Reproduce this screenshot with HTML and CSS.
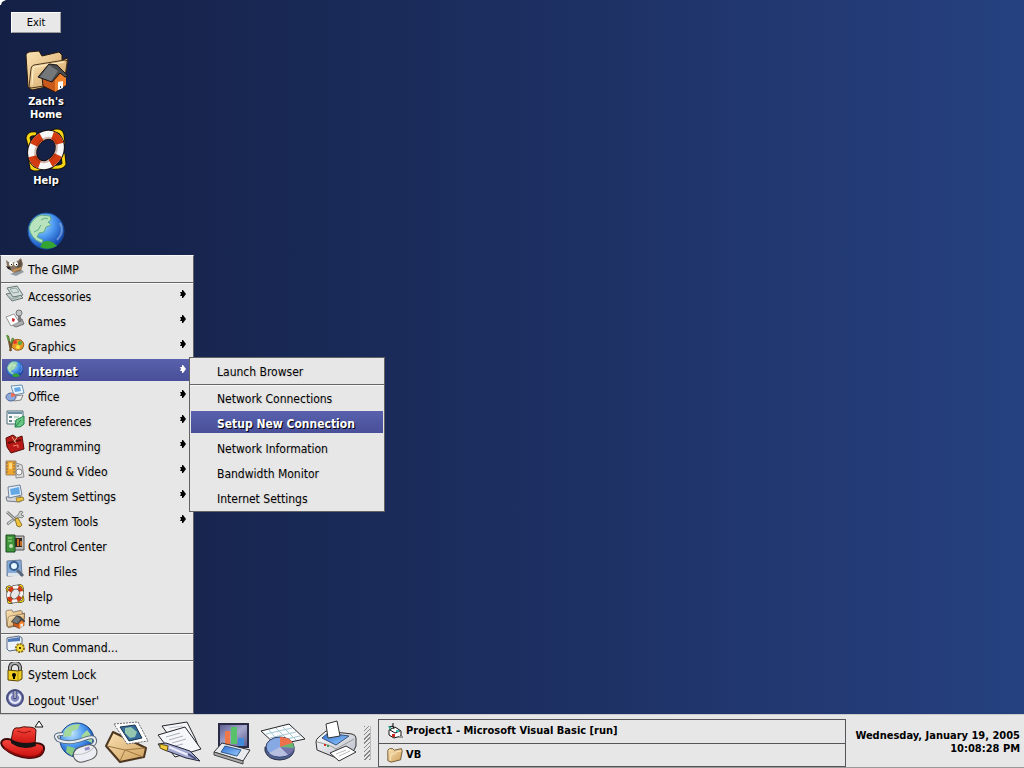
FILE: index.html
```html
<!DOCTYPE html>
<html lang="en">
<head>
<meta charset="utf-8">
<title>Desktop</title>
<link rel="stylesheet" href="styles.css">
</head>
<body>
<svg class="defs" aria-hidden="true">
  <defs>
    <linearGradient id="tan" x1="0" y1="0" x2="1" y2="1"><stop offset="0" stop-color="#fbe3b4"/><stop offset="1" stop-color="#cf9f5c"/></linearGradient>
    <radialGradient id="sea" cx=".35" cy=".3" r=".75"><stop offset="0" stop-color="#c2e6fb"/><stop offset=".5" stop-color="#4b98f0"/><stop offset="1" stop-color="#0d3da8"/></radialGradient>
    <linearGradient id="silver" x1="0" y1="0" x2="1" y2="1"><stop offset="0" stop-color="#fff"/><stop offset="1" stop-color="#b4b8c4"/></linearGradient>
    <linearGradient id="blue" x1="0" y1="0" x2="1" y2="1"><stop offset="0" stop-color="#2c6fd6"/><stop offset="1" stop-color="#9ccdfa"/></linearGradient>
    <linearGradient id="slate" x1="0" y1="0" x2="1" y2="1"><stop offset="0" stop-color="#59598c"/><stop offset=".5" stop-color="#a5a7cd"/><stop offset="1" stop-color="#55578a"/></linearGradient>
    <linearGradient id="felt" x1="0" y1="0" x2="0" y2="1"><stop offset="0" stop-color="#f9483c"/><stop offset="1" stop-color="#c80d0d"/></linearGradient>
  </defs>
  <symbol id="home" viewBox="0 0 44 44">
    <path d="M4 38 2 6q0-2 3-3l10-1 3 5 17-4 3 3v5l6-2-4 27-18 2-14 3z" fill="url(#tan)" stroke="#28190d"/>
    <path d="M5 38 7 20q0-3 3-4l31-5q3 0 2 3l-3 20-33 5z" fill="url(#tan)" stroke="#4c351c"/>
    <path d="m8 36 1-15q0-3 3-3l28-5" fill="none" stroke="#fff0cb"/>
    <path d="m18 28 1 9 12 6 11-7-1-10-9-8-9 1z" fill="#c9591b" stroke="#2b1305"/>
    <path d="m31 31 7-8 4 3v10l-11 7z" fill="#ef812c"/>
    <path d="m14 28 11-13 8 1 11 11-3 1-5-4-8 9z" fill="#4a4d4e" stroke="#171717"/>
    <path d="m25 16 9 6-7 10-11-4z" fill="#74787a"/>
    <path d="m34 33 5-1v7l-5 2z" fill="#fff"/><path d="M36 37h1v2h-1z" fill="#345"/>
  </symbol>
  <symbol id="buoy" viewBox="0 0 44 44">
    <path d="M12 6Q5 5 4 10l3 11M28 4q9-3 10 3l1 9M6 29l2 11q3 2 9 0M39 26l1 10q-2 4-12 3" fill="none" stroke="#181408" stroke-width="5"/>
    <path d="M12 6Q5 5 4 10l3 11M28 4q9-3 10 3l1 9M6 29l2 11q3 2 9 0M39 26l1 10q-2 4-12 3" fill="none" stroke="#f7d516" stroke-width="3"/>
    <g transform="rotate(32 22 22)">
      <ellipse cx="22" cy="22" rx="13" ry="16" fill="none" stroke="#171010" stroke-width="10"/>
      <ellipse cx="22" cy="22" rx="13" ry="16" fill="none" stroke="#f7f7f7" stroke-width="8"/>
      <ellipse cx="22" cy="22" rx="13" ry="16" fill="none" stroke="#d43b10" stroke-width="8" pathLength="80" stroke-dasharray="10 10" stroke-dashoffset="2"/>
      <ellipse cx="22" cy="22" rx="10" ry="13" fill="none" stroke="#812409" stroke-opacity=".3" stroke-width="2"/>
    </g>
  </symbol>
  <symbol id="globe" viewBox="0 0 44 44">
    <circle cx="22" cy="22" r="18" fill="url(#sea)" stroke="#164a96"/>
    <path d="M5 19q3-10 12-13l9 1 1 4-3 2 3 3-5 2-2 5-5 1-2 4 6 3-1 3q-6-2-9-6-3-4-4-9z" fill="#b8e3bd" stroke="#5fae86"/>
    <path d="M17 11l4-2 3 1M10 23l4-2 3-5" fill="none" stroke="#5fae86"/>
    <path d="M19 33q7-3 12 2l2 2q-9 5-17 1z" fill="#35a532"/>
    <path d="M36 14q5 9-3 17" fill="none" stroke="#d2e9fa" stroke-opacity=".4" stroke-width="2"/>
  </symbol>
  <symbol id="folder" viewBox="0 0 20 20">
    <path d="M1 17V4l2-2h4l2 2 9-2 1 3-2 11-12 3z" fill="url(#tan)" stroke="#5c451f"/><path d="m4 17 1-8q6 0 7-3l6-1" fill="none" stroke="#fff0c8"/>
  </symbol>
  <symbol id="arrow" viewBox="0 0 6 10"><path d="M0 3h2V1h1l3 4-3 4H2V7H0l1-2z" fill="currentColor"/></symbol>
</svg>

<div class="screen">
  <main class="desktop">
    <svg class="cursor" viewBox="0 0 6 5" aria-hidden="true"><path d="M0 0h6L4 1 2 2 1 5H0z" fill="#fff"/></svg>
    <button class="exit" type="button">Exit</button>
    <div class="shortcuts">
      <a class="shortcut" href="#home"><svg class="big"><use href="#home"/></svg><span>Zach's Home</span></a>
      <a class="shortcut help" href="#help"><svg class="big"><use href="#buoy"/></svg><span>Help</span></a>
      <a class="shortcut" href="#web" aria-label="Web browser"><svg class="big"><use href="#globe"/></svg></a>
    </div>

    <nav class="menu start" aria-label="Start menu">
      <div class="group single">
        <button class="item" type="button"><svg class="icon" viewBox="0 0 20 20"><path d="m5 17 12-4 2 2-8 4z" fill="#929ba2"/><path d="m1 3 4 3 6-1 5-4 2 6-2 7-7 2-4-3-3-4z" fill="#8a7562"/><path d="m13 6 3-4 1 5-2 6-4 1z" fill="#5d5046"/><path d="m1 9 4 1 1 3-3-1z" fill="#222"/><circle cx="6" cy="7" r="2" fill="#fff"/><circle cx="11" cy="7" r="2" fill="#fff"/><path d="M6 7h1v1H6zM11 7h1v1h-1z"/><path d="m8 14 8-3" stroke="#c89150" stroke-width="2"/></svg><span>The GIMP</span></button>
      </div>
      <div class="group">
        <button class="item" type="button"><svg class="icon" viewBox="0 0 20 20"><path d="m1 10 11-2 6 6-11 3z" fill="#c8d0d0" stroke="#667672"/><path d="m2 4 10-2 6 9-10 2z" fill="#d4dfdd" stroke="#667672"/><path d="m5 5 6-1 3 4-6 1zM3 12l4 3 7-2" fill="none" stroke="#91a8a1"/></svg><span>Accessories</span><svg class="arrow"><use href="#arrow"/></svg></button>
        <button class="item" type="button"><svg class="icon" viewBox="0 0 20 20"><path d="m8 11 9-1 2 5-8 3-4-2z" fill="#adb0b2" stroke="#6d7072"/><path d="m1 8 8-3 5 8-8 4z" fill="#fff" stroke="#999"/><path d="m7 9 3 1-1 3-2-1z" fill="#d4252c"/><path d="m14 5 1 8" stroke="#777" stroke-width="3"/><circle cx="14" cy="4" r="3" fill="#c1c4c5" stroke="#747678"/></svg><span>Games</span><svg class="arrow"><use href="#arrow"/></svg></button>
        <button class="item" type="button"><svg class="icon" viewBox="0 0 20 20"><path d="M5 9q4-5 11-3 5 4 1 9-6 3-9-1l-3-1z" fill="#e89a28" stroke="#966018"/><circle cx="10" cy="8" r="2" fill="#e53e2c"/><circle cx="15" cy="9" r="2" fill="#53a84a"/><circle cx="13" cy="13" r="2" fill="#ffe13f"/><path d="m3 2 3 15M8 4 5 17" stroke="#715128" stroke-width="2"/><path d="m2 1 2 6M8 4 6 9" stroke="#5c9b44" stroke-width="2"/></svg><span>Graphics</span><svg class="arrow"><use href="#arrow"/></svg></button>
        <button class="item active" type="button" aria-expanded="true"><svg class="icon"><use href="#globe"/></svg><span>Internet</span><svg class="arrow"><use href="#arrow"/></svg></button>
        <button class="item" type="button"><svg class="icon" viewBox="0 0 20 20"><path d="m6 2 11-1 2 8-10 2z" fill="#e8f5ff" stroke="#6c91b5"/><path d="m9 4 6-1 1 4-6 1z" fill="#65a6e4"/><path d="m9 12 9-1-2 5-7 1z" fill="#eee" stroke="#888"/><ellipse cx="6" cy="13" rx="5" ry="4" fill="#8da9dc" stroke="#506698"/><path d="M6 13V9q4 0 5 3z" fill="#ea6f55"/></svg><span>Office</span><svg class="arrow"><use href="#arrow"/></svg></button>
        <button class="item" type="button"><svg class="icon" viewBox="0 0 20 20"><path d="M2 2h16v13H2z" fill="#f5f8f7" stroke="#4a6b79"/><path d="M3 3h14v2H3z" fill="#6990a5"/><path d="M4 7h3v2H4zm0 4h3v2H4z" fill="#698891"/><path d="M9 8h5M9 12h4" stroke="#8cb19b"/><path d="m10 18 1-7 8-4v8q-3 4-8 3z" fill="#68c783" stroke="#248349"/><path d="m10 18 6-7" stroke="#248349"/></svg><span>Preferences</span><svg class="arrow"><use href="#arrow"/></svg></button>
        <button class="item" type="button"><svg class="icon" viewBox="0 0 20 20"><path d="m1 4 7-3 4 3 5-2 2 13-13 4-4-6z" fill="#b91916" stroke="#59100c"/><path d="m3 9 13-3" stroke="#611009" stroke-width="2"/><path d="m7 3 4 6M13 2l-4 6" stroke="#e0b08b"/><path d="m8 12 5-1v3" fill="none" stroke="#f18372"/></svg><span>Programming</span><svg class="arrow"><use href="#arrow"/></svg></button>
        <button class="item" type="button"><svg class="icon" viewBox="0 0 20 20"><path d="M1 2h10v14H1z" fill="#f0a52c" stroke="#9a8467"/><path d="M2 3v12M9 3v12" stroke="#776a58" stroke-dasharray="2 1"/><path d="M4 4h3v6H4z" fill="#ffd880"/><path d="m11 4 6 2 2 12-8 1z" fill="#ddd" stroke="#8e8e8e"/><circle cx="14" cy="13" r="3" fill="#f5f5f5" stroke="#888"/><circle cx="13" cy="7" r="1" fill="#777"/></svg><span>Sound &amp; Video</span><svg class="arrow"><use href="#arrow"/></svg></button>
        <button class="item" type="button"><svg class="icon" viewBox="0 0 20 20"><path d="m1 13 14-1 4 3-4 3-13-1z" fill="#d5d7dc" stroke="#777d88"/><path d="m3 3 12-2 2 10-13 3z" fill="#e5eef7" stroke="#70849b"/><path d="m5 5 9-2 1 7-9 1z" fill="#64a7e5"/><path d="m11 14 7-1 1 3-7 2z" fill="#efc339" stroke="#9c8541"/></svg><span>System Settings</span><svg class="arrow"><use href="#arrow"/></svg></button>
        <button class="item" type="button"><svg class="icon" viewBox="0 0 20 20"><path d="m2 14 11-8 2-4 3 1-2 3 3 1-2 2-4-1-10 8z" fill="#ccd0ce" stroke="#838784"/><path d="m2 3 9 8" stroke="#777" stroke-width="3"/><path d="m2 3 9 8" stroke="#ddd"/><path d="m10 10 3-1 4 7-2 2-3-1z" fill="#efc13d" stroke="#8e762c"/></svg><span>System Tools</span><svg class="arrow"><use href="#arrow"/></svg></button>
        <button class="item" type="button"><svg class="icon" viewBox="0 0 20 20"><path d="M8 2h11v14H8z" fill="#bbb" stroke="#555"/><path d="M10 4h7v9h-7z" fill="#362420"/><path d="M13 5v7m3-5v5" stroke="#c56b20" stroke-width="2"/><path d="M1 1h9v17H1z" fill="#3f933b" stroke="#1d4c20"/><path d="M3 4h4M3 7h4" stroke="#a0db86"/><circle cx="6" cy="12" r="2" fill="#bfe0af"/></svg><span>Control Center</span></button>
        <button class="item" type="button"><svg class="icon" viewBox="0 0 20 20"><path d="m2 2 14-1 1 15-15 1z" fill="#86aad7" stroke="#6c7e9c"/><path d="M3 14h12v3H3z" fill="#dce3e9"/><circle cx="9" cy="7" r="4" fill="#e8f8ff" stroke="#365f90" stroke-width="2"/><path d="m12 11 6 6" stroke="#596879" stroke-width="3"/></svg><span>Find Files</span></button>
        <button class="item" type="button"><svg class="icon"><use href="#buoy"/></svg><span>Help</span></button>
        <button class="item" type="button"><svg class="icon"><use href="#home"/></svg><span>Home</span></button>
      </div>
      <div class="group single">
        <button class="item" type="button"><svg class="icon" viewBox="0 0 20 20"><path d="m2 3 12-2 3 2v11L4 16l-2-2z" fill="#eef2f9" stroke="#586a87"/><path d="m3 4 12-2v4L3 7z" fill="#4f78b9"/><circle cx="15" cy="13" r="4" fill="#f4d132" stroke="#8b7116" stroke-width="2" stroke-dasharray="2 1"/><circle cx="15" cy="13" r="3" fill="#f6db3d"/><circle cx="15" cy="13" r="1"/></svg><span>Run Command...</span></button>
      </div>
      <div class="group roomy">
        <button class="item" type="button"><svg class="icon" viewBox="0 0 20 20"><path d="M5 9V5q1-4 5-4t5 4v6" fill="none" stroke="#333" stroke-width="4"/><path d="M5 9V5q1-4 5-4t5 4v6" fill="none" stroke="#aaa" stroke-width="2"/><path d="m3 8 10 1 4-1v9l-4 2-10-1z" fill="#f0cc20" stroke="#594408"/><path d="M13 9v10" stroke="#b3900d"/><circle cx="9" cy="13" r="2"/><path d="M8 13h2v4H8z"/></svg><span>System Lock</span></button>
        <button class="item" type="button"><svg class="icon" viewBox="0 0 20 20"><circle cx="10" cy="10" r="8" fill="#8187bc" stroke="#494f83" stroke-width="2"/><path d="M7 6q-4 3-1 7 4 4 8 0 3-4-1-7" fill="none" stroke="#e9ebf6" stroke-width="2"/><path d="M10 2v9" stroke="#3c426f" stroke-width="3"/><path d="M10 3v7" stroke="#fff"/></svg><span>Logout 'User'</span></button>
      </div>
    </nav>

    <nav class="menu sub" aria-label="Internet">
      <div class="group single"><button class="item" type="button"><span>Launch Browser</span></button></div>
      <div class="group">
        <button class="item" type="button"><span>Network Connections</span></button>
        <button class="item active" type="button"><span>Setup New Connection</span></button>
        <button class="item" type="button"><span>Network Information</span></button>
        <button class="item" type="button"><span>Bandwidth Monitor</span></button>
      </div>
      <div class="roomy"><button class="item" type="button"><span>Internet Settings</span></button></div>
    </nav>
  </main>

  <footer class="taskbar">
    <div class="launchers">
      <button class="launcher" type="button" aria-label="Start"><svg viewBox="0 0 46 46">
        <path d="m39 1-4 6h8z" fill="#fff" stroke="#111"/>
        <path d="M3 20q-4 3 1 8 10 9 25 10 14 0 15-9 1-6-10-6L12 20q-6-2-9 0z" fill="url(#felt)" stroke="#3a0907" stroke-width="2"/>
        <path d="M4 28q11 8 25 9 12 0 14-7" fill="none" stroke="#8c0a0a" stroke-width="2"/>
        <path d="m11 21 2-10q1-4 6-3 5-2 8-1 8 0 9 3l-1 15q-14 4-24-4z" fill="url(#felt)" stroke="#47100d"/>
        <path d="M11 19q10 6 24 3l1 4q-14 5-25-3z" fill="#151515"/><path d="m17 11 7 2 7-2" fill="none" stroke="#911"/>
      </svg></button>
      <button class="launcher" type="button" aria-label="Browser"><svg viewBox="0 0 46 46">
        <circle cx="25" cy="20" r="17" fill="url(#sea)" stroke="#184581"/>
        <path d="M13 10q5-6 15-6l-2 5-6 2-1 5-8 1zm22 0q6 6 5 13l-6-3-5 1 1-6z" fill="#a4d99b"/><path d="m15 26 8 2-3 8-6-4z" fill="#88c984"/>
        <path d="M11 14Q0 14 6 20q10 5 26-1 10-4 11 1 1 3-4 6" fill="none" stroke="#5b6b7d" stroke-width="4"/><path d="M11 14Q0 14 6 20q10 5 26-1 10-4 11 1 1 3-4 6" fill="none" stroke="#e8edf3" stroke-width="2"/>
        <g transform="rotate(-18 33 33)"><rect x="21" y="26" width="24" height="15" rx="8" fill="#eceef3" stroke="#555"/><path d="M22 31q12 5 22-1" fill="none" stroke="#bbb"/><path d="M34 28h5v3h-5z" fill="#938ac4"/></g>
      </svg></button>
      <button class="launcher" type="button" aria-label="Mail"><svg viewBox="0 0 46 46">
        <path d="m2 26 7-14 33 16-2 9-24 5z" fill="url(#tan)" stroke="#4c3620" stroke-width="2" stroke-linejoin="round"/><path d="m3 26 18 4 20-2M16 41l5-11 18 7" fill="none" stroke="#9d7640"/>
        <path d="m10 4 24-2 10 19-21 3z" fill="#fff" stroke="#66696c" stroke-dasharray="2 1"/>
        <path d="m16 7 15-2 7 13-13 3z" fill="#356c9c" stroke="#18344b"/><path d="m21 8 6-1 6 5-2 5-5 1-5-5z" fill="#95c7b0"/>
      </svg></button>
      <button class="launcher" type="button" aria-label="Word processor"><svg viewBox="0 0 46 46">
        <path d="m6 6 25-4 8 16 4 10-19 3z" fill="#f7f7fa" stroke="#202329"/><path d="m13 8 14-2M15 11l14-2" stroke="#c5c9d2"/>
        <path d="m2 15 27-8 16 22-26 8z" fill="#f6f7fa" stroke="#202329"/><path d="m10 17 14-4M13 20l14-4M16 23l14-4M19 26l8-2" stroke="#a9afbc"/>
        <path d="m2 24 8-1 24 8 10 10-14-3-24-9z" fill="#a3a8d1" stroke="#232738"/><path d="m4 24 8 2-1 5-7-3z" fill="#f0ca38" stroke="#6b5714"/><path d="m13 27 19 8" stroke="#eef" stroke-width="2"/><path d="m32 34 8 5" stroke="#494f7c" stroke-width="2"/>
      </svg></button>
      <button class="launcher" type="button" aria-label="Presentation"><svg viewBox="0 0 46 46">
        <path d="M11 4h29v23H11z" fill="url(#slate)" stroke="#292b45" stroke-width="2"/><path d="M17 11h5v14h-5z" fill="#f07848"/><path d="M23 7h6v17h-6z" fill="#58c26b"/><path d="M30 18h6v8h-6z" fill="#438bd8"/>
        <path d="m14 23 28 7-7 11-29-9z" fill="#e9eaed" stroke="#303236" stroke-linejoin="round"/><path d="m17 26 16 4-4 6-16-4z" fill="url(#blue)" stroke="#31598b"/><path d="m6 32 29 9v3L6 35z" fill="#aaa" stroke="#444"/>
      </svg></button>
      <button class="launcher" type="button" aria-label="Spreadsheet"><svg viewBox="0 0 46 46">
        <path d="m1 11 28-7 16 15-29 6z" fill="#fafcfd" stroke="#24282b"/><path d="m6 14 26-6M10 18l26-6M13 22l27-6M9 10l11 13M16 8l13 13M23 7l13 13" stroke="#a7c8d3"/>
        <path d="M5 27v4q3 9 15 9 12-1 14-9v-4z" fill="#51618f" stroke="#252e49"/><ellipse cx="20" cy="27" rx="14" ry="10" fill="#87a9e3" stroke="#303c62"/>
        <path d="M20 27V17q10 0 13 6z" fill="#ed714a"/><path d="m20 27 13-4 1 5z" fill="#66b967"/><path d="m20 27 8 8q6-3 6-7z" fill="#7474ab"/><path d="m20 27 8 8q-12 4-19-2z" fill="#b6bfdf"/>
      </svg></button>
      <button class="launcher" type="button" aria-label="Printer"><svg viewBox="0 0 46 46">
        <path d="M4 22q0-3 3-5l7-6 26 3q4 1 4 4v8q-2 8-17 13L5 30z" fill="url(#silver)" stroke="#333" stroke-linejoin="round"/><path d="M5 22q14 3 19 7l18-10M24 29v9" fill="none" stroke="#999"/>
        <path d="m10 18 6-5 21 3-13 9z" fill="url(#blue)" stroke="#35547e"/><path d="m14 4 11-3 3 15-12 2z" fill="#fff" stroke="#333"/><path d="m18 33 16-7 10 6-17 9z" fill="#fff" stroke="#333"/><path d="m24 34 10-4M27 36l11-5" stroke="#bbb"/><path d="M12 24h2v2h-2z" fill="#d32b24"/><path d="M15 25h2v2h-2z" fill="#35a34c"/>
      </svg></button>
    </div>
    <div class="grip"></div>
    <div class="tasks">
      <button class="task" type="button"><svg class="task-icon" viewBox="0 0 16 16"><path d="m2 7 6-3 6 4v5l-7 2-5-3z" fill="#fff" stroke="#111"/><path d="m3 7 5 3 5-2M2 4l4-1 1 3M6 0v4" fill="none" stroke="#111"/><path d="m1 3 3 1-1 3z" fill="#18a98f"/><path d="M5 11h3v3H5z" fill="#cc2924"/><path d="M9 7h3v2H9z" fill="#42bbb3"/><path d="M12 13h4v2h-5z" fill="#999"/></svg><span>Project1 - Microsoft Visual Basic [run]</span></button>
      <button class="task" type="button"><svg class="task-icon"><use href="#folder"/></svg><span>VB</span></button>
    </div>
    <time class="clock" datetime="2005-01-19T22:08:28">Wednesday, January 19, 2005<br>10:08:28 PM</time>
  </footer>
</div>
</body>
</html>
```
FILE: styles.css
```css
* { box-sizing: border-box; }
body { margin: 0; font: 12px/14px "DejaVu Sans Condensed", "DejaVu Sans", sans-serif; font-stretch: condensed; color: #000; }
button { margin: 0; padding: 0; border: 0; background: none; font: inherit; color: inherit; }
.defs { position: absolute; width: 0; height: 0; }
.screen { display: flex; flex-direction: column; height: 100vh; overflow: hidden; }

.desktop { position: relative; flex: 1; min-height: 0; padding: 12px 11px 0; background: linear-gradient(90deg, #142045, #1d3063 55%, #264180); }
.cursor { position: absolute; top: 0; left: 0; width: 6px; height: 5px; }
.exit { display: block; width: 50px; height: 21px; background: #e8e8e8; border: 1px solid #fff; border-right-color: #999; border-bottom-color: #999; font-size: 11px; }
.shortcuts { display: flex; flex-direction: column; width: 70px; padding-top: 16px; }
.shortcut { display: flex; flex-direction: column; align-items: center; gap: 2px; margin-bottom: 7px; color: #fff; font-size: 11px; line-height: 13px; font-weight: bold; text-align: center; text-decoration: none; text-shadow: 1px 1px 1px #000; }
.shortcut span { max-width: 52px; }
.help { margin-bottom: 22px; }
.big { width: 44px; height: 44px; }

.menu { position: absolute; border: 1px solid #626264; background: #e7e7e7; }
.start { left: 0; bottom: 0; width: 194px; border-top-color: #f8f8f8; }
.sub { left: 189px; bottom: 202px; width: 196px; }
.group + .group { border-top: 1px solid #666; box-shadow: inset 0 1px #f8f8f8; }
.item { display: flex; align-items: center; width: 100%; height: 25px; padding: 0 7px 0 4px; text-align: left; text-shadow: 1px 1px 1px #ccc; }
.single .item, .roomy .item { height: 26px; }
.item span { flex: 1; padding: 2px 0 0 3px; white-space: nowrap; }
.icon { width: 20px; height: 20px; margin-bottom: 4px; }
.arrow { width: 6px; height: 10px; margin-bottom: 4px; }
.sub .item { padding-left: 24px; }
.active { color: #fff; font-weight: bold; background: linear-gradient(#5961ad, #494f98) 1px 1px / 192px 22px no-repeat; }
.item.active { text-shadow: 1px 1px 0 #000; }
.start .active { background-size: 187px 22px; }

.taskbar { display: flex; flex: none; height: 54px; padding-top: 4px; background: #e7e7e7; border-top: 1px solid #c9c9cb; border-bottom: 1px solid #999; }
.launchers { display: flex; gap: 6px; padding-top: 1px; }
.launcher, .launcher svg { display: block; width: 46px; height: 46px; }
.grip { width: 7px; height: 34px; margin: 7px 7px 0 6px; border-right: 1px solid #bbb; background: repeating-linear-gradient(135deg, #888 0 1px, #e7e7e7 1px 3px); }
.tasks { display: flex; flex: 1; flex-direction: column; min-width: 0; border: 1px solid #55555a; }
.task { display: flex; flex: 1; align-items: center; gap: 3px; padding-left: 8px; font-size: 11px; font-weight: bold; }
.task + .task { border-top: 1px solid #55555a; }
.task-icon { width: 16px; height: 16px; }
.clock { width: 178px; padding: 10px 4px 0 0; font-size: 11px; line-height: 13px; font-weight: bold; text-align: right; white-space: nowrap; }
```
